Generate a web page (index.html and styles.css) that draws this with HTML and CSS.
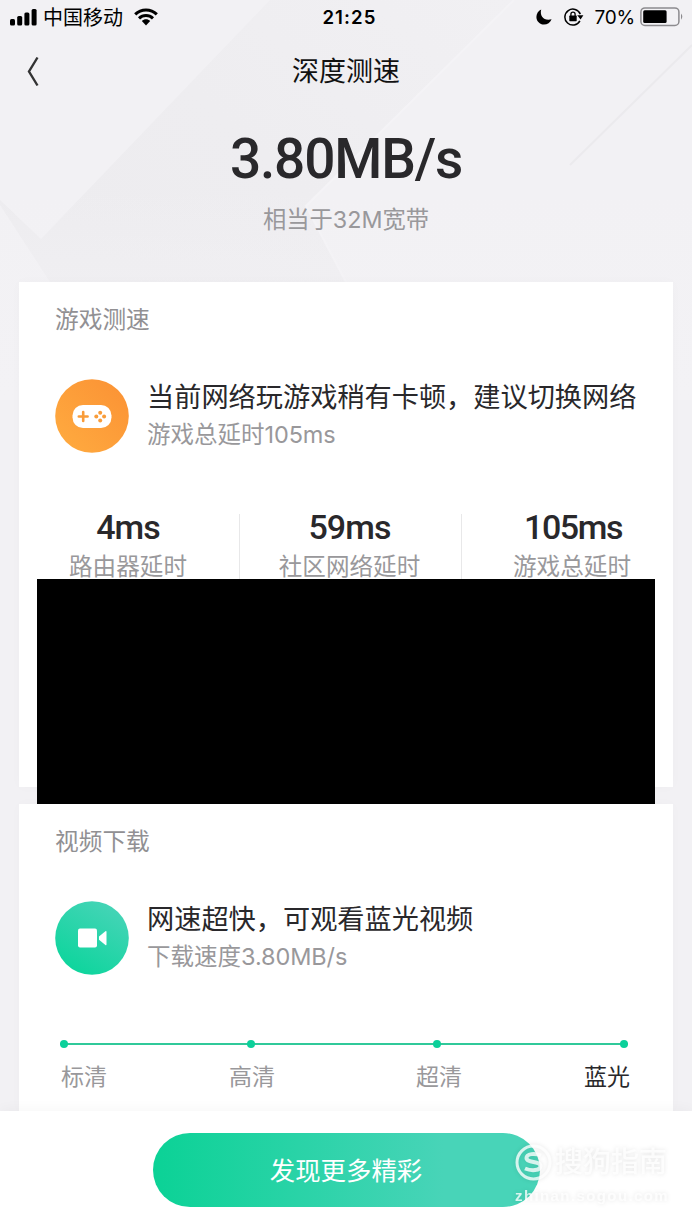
FILE: index.html
```html
<!DOCTYPE html>
<html lang="zh-CN">
<head>
<meta charset="utf-8">
<title>深度测速</title>
<link rel="stylesheet" href="styles.css">
</head>
<body>
<div class="screen">
  <svg class="backdrop" width="692" height="400" viewBox="0 0 692 400">
    <defs>
      <linearGradient id="fold" x1="0" y1="0.6" x2="1" y2="0"><stop offset="0" stop-color="#edecef"/><stop offset="0.4" stop-color="#eeedf0"/><stop offset="1" stop-color="#f1f0f3"/></linearGradient>
      <linearGradient id="fade" x1="0" y1="0" x2="0" y2="1"><stop offset="0" stop-color="#f3f2f5" stop-opacity="0"/><stop offset="1" stop-color="#f3f2f5"/></linearGradient>
    </defs>
    <path d="M270 0H514L306 206L346 282H50L0 205V200L41 239Z" fill="url(#fold)"/>
    <path d="M514 0L306 206L346 282" fill="none" stroke="#f4f3f6" stroke-width="2"/>
    <path d="M692 45L570 165" stroke="#ebeaed" stroke-width="2"/>
    <path d="M0 190H692V400H0Z" fill="url(#fade)"/>
  </svg>

  <div class="status">
    <div class="status-left">
      <svg class="signal" width="27" height="18" viewBox="0 0 27 18"><rect x="0" y="11" width="5" height="6.5" rx="1.5"/><rect x="7.2" y="8" width="5" height="9.5" rx="1.5"/><rect x="14.4" y="4.5" width="5" height="13" rx="1.5"/><rect x="21.6" y="1" width="5" height="16.5" rx="1.5"/></svg>
      <span class="carrier">中国移动</span>
      <svg class="wifi" width="24" height="18" viewBox="0 0 24 18"><path d="M1.2 6.4C7.2.4 16.8.4 22.8 6.4M5 10.4C9 6.6 15 6.6 19 10.4" fill="none" stroke="#000" stroke-width="3"/><path d="M7.8 13C10.2 10.8 13.8 10.8 16.2 13L12 17.4Z"/></svg>
    </div>
    <span class="clock">21:25</span>
    <div class="status-right">
      <svg width="16" height="16" viewBox="0 0 16 16"><path d="M5.2.4C3.4 6.8 8.2 12.4 15.6 10.2C14.2 13.6 11.4 15.6 8 15.6C3.8 15.6.4 12.2.4 8C.4 4.6 2.2 1.8 5.2.4Z"/></svg>
      <svg class="lock" width="20" height="18" viewBox="0 0 20 18"><path d="M16.3 6.1A8 8 0 1 0 15.9 12.9" fill="none" stroke="#000" stroke-width="1.5"/><path d="M13.2 7.2H19.4L16.6 11.4Z"/><rect x="5.3" y="7.6" width="7.4" height="5.6" rx=".6"/><path d="M6.9 8V6.2a2.1 2.1 0 0 1 4.2 0V8" fill="none" stroke="#000" stroke-width="1.3"/></svg>
      <span class="percent">70%</span>
      <svg class="battery" width="44" height="20" viewBox="0 0 44 20"><rect x=".9" y=".9" width="38" height="17.6" rx="4" fill="none" stroke="#8c8b8e" stroke-width="1.5"/><rect x="3.2" y="3.3" width="23.4" height="12.8" rx="1.5"/><path d="M41 6.6q2.6 3 0 6.2Z" fill="#8c8b8e"/></svg>
    </div>
  </div>

  <div class="nav">
    <svg class="back" width="12" height="31" viewBox="0 0 12 31"><path d="M10.5 1.5L2 15.5L10.5 29.5" fill="none" stroke="#333" stroke-width="2.4"/></svg>
    <h1 class="title">深度测速</h1>
  </div>

  <div class="hero">
    <div class="speed">3.80MB/s</div>
    <div class="equiv">相当于32M宽带</div>
  </div>

  <section class="card game">
    <h2 class="heading">游戏测速</h2>
    <div class="summary">
      <svg class="badge" width="74" height="74" viewBox="0 0 74 74">
        <defs><linearGradient id="orange" x1="0" y1="1" x2="1" y2="0"><stop offset="0" stop-color="#ffac40"/><stop offset="1" stop-color="#fb9134"/></linearGradient></defs>
        <circle cx="37" cy="37" r="36.8" fill="url(#orange)"/>
        <rect x="17.5" y="26" width="39" height="23" rx="10.5" fill="#fff"/>
        <path d="M23.8 37.5H32.6M28.2 33V42" stroke="#f99c39" stroke-width="2.6" stroke-linecap="round"/>
        <g fill="#f99c39"><circle cx="45.2" cy="33.7" r="2"/><circle cx="45.2" cy="41.5" r="2"/><circle cx="41.3" cy="37.6" r="2"/><circle cx="49.1" cy="37.6" r="2"/></g>
      </svg>
      <div class="copy">
        <div class="lead">当前网络玩游戏稍有卡顿，建议切换网络</div>
        <div class="detail">游戏总延时<span class="latin">105ms</span></div>
      </div>
    </div>
    <div class="metrics">
      <div class="metric"><div class="value">4ms</div><div class="label">路由器延时</div></div>
      <div class="metric"><div class="value">59ms</div><div class="label">社区网络延时</div></div>
      <div class="metric"><div class="value">105ms</div><div class="label">游戏总延时</div></div>
    </div>
    <div class="redaction"></div>
  </section>

  <section class="card video">
    <h2 class="heading">视频下载</h2>
    <div class="summary">
      <svg class="badge" width="74" height="74" viewBox="0 0 74 74">
        <defs><linearGradient id="green" x1="0.2" y1="1" x2="0.8" y2="0"><stop offset="0" stop-color="#0ad59b"/><stop offset="1" stop-color="#48d4b8"/></linearGradient></defs>
        <circle cx="37" cy="37" r="36.8" fill="url(#green)"/>
        <rect x="23" y="27.6" width="19" height="19" rx="2" fill="#fff"/>
        <path d="M44 35.5L50.4 30.2Q51.5 29.5 51.5 31V43.2Q51.5 44.7 50.4 44L44 38.7Z" fill="#fff"/>
      </svg>
      <div class="copy">
        <div class="lead">网速超快，可观看蓝光视频</div>
        <div class="detail">下载速度<span class="latin">3.80MB/s</span></div>
      </div>
    </div>
    <div class="track"><i class="dot"></i><i class="dot"></i><i class="dot"></i><i class="dot"></i></div>
    <div class="levels"><span class="level">标清</span><span class="level">高清</span><span class="level">超清</span><span class="level active">蓝光</span></div>
  </section>

  <div class="footer">
    <div class="button">发现更多精彩</div>
    <div class="watermark">
      <div class="brand">
        <svg width="37" height="37" viewBox="0 0 37 37"><circle cx="18.5" cy="18.5" r="16.5" fill="none" stroke="currentColor" stroke-width="3"/><path d="M26 11.5C20 9 11.5 9.5 11.5 14C11.5 19 25.5 17 25.5 22C25.5 27 16 27 10 24.5" fill="none" stroke="currentColor" stroke-width="4"/></svg>
        <span>搜狗指南</span>
      </div>
      <div class="site">zhinan.sogou.com</div>
    </div>
  </div>
</div>
</body>
</html>
```
FILE: styles.css
```css
* { box-sizing: border-box; }
body {
  margin: 0;
  background: #f3f2f5;
  font-family: Inter, "Noto Sans CJK SC", sans-serif;
  color: #29282b;
}
svg { display: block; flex: none; }
.screen {
  position: relative;
  width: 692px;
  height: 1230px;
  overflow: hidden;
  background: #f2f1f4;
  white-space: nowrap;
}
.backdrop { position: absolute; left: 0; top: 0; }

.status {
  position: relative;
  display: grid;
  grid-template-columns: 1fr auto 1fr;
  align-items: center;
  height: 34px;
  padding: 0 8px 0 10px;
  color: #000;
}
.status-left, .status-right { display: flex; align-items: center; }
.status-right { justify-content: flex-end; }
.carrier { margin-left: 6px; padding-top: 2px; font-size: 20px; line-height: 30px; }
.wifi { margin-left: 11px; }
.clock { padding-left: 5px; font-size: 18.6px; font-weight: 600; letter-spacing: 1.1px; }
.lock { margin-left: 12px; }
.percent { margin-left: 11px; font-size: 19px; letter-spacing: -0.2px; }
.battery { margin-left: 5px; }

.nav {
  position: relative;
  display: grid;
  grid-template-columns: 36px 1fr 36px;
  align-items: center;
  height: 74px;
  padding: 0 27px;
}
.title {
  margin: 0;
  padding-top: 2px;
  font-size: 27px;
  font-weight: 400;
  line-height: 40px;
  text-align: center;
  color: #111;
}

.hero { position: relative; height: 174px; padding-top: 18px; text-align: center; }
.speed {
  font-family: Roboto, sans-serif;
  font-size: 55px;
  font-weight: 500;
  line-height: 66px;
  letter-spacing: -1.2px;
}
.equiv { margin-top: 11px; font-size: 23.3px; line-height: 34px; color: #99989b; }

.card {
  position: relative;
  margin: 0 19px;
  padding: 0 36px;
  background: #fff;
  box-shadow: 0 0 12px rgba(0, 0, 0, 0.02);
}
.game { height: 505px; padding-top: 20px; }
.video { height: 307px; margin-top: 17px; padding-top: 20px; }
.heading {
  margin: 0;
  font-size: 23.7px;
  font-weight: 400;
  line-height: 36px;
  color: #919093;
}
.summary { display: flex; gap: 18px; margin-top: 41px; }
.copy { padding-top: 1px; }
.lead { font-size: 27.2px; line-height: 36px; }
.detail { margin-top: 1px; font-size: 23.5px; line-height: 36px; color: #99989b; }
.latin { letter-spacing: -0.1px; }

.metrics { display: flex; margin: 61px -36px 0; }
.metric { flex: 0 0 222px; height: 66px; text-align: center; }
.metric:first-child { flex-basis: 220px; padding-right: 2px; }
.metric:nth-child(2) { padding-right: 2px; }
.metric:last-child { flex-basis: 212px; padding-left: 9px; }
.metric + .metric { border-left: 1px solid #e8e8e9; }
.value {
  font-family: Roboto, sans-serif;
  font-size: 34px;
  font-weight: 500;
  line-height: 26px;
  letter-spacing: -0.9px;
}
.metric:last-child .value { padding-left: 2px; letter-spacing: -1.4px; }
.label { margin-top: 9px; font-size: 23.6px; line-height: 36px; color: #99989b; }
.redaction {
  position: absolute;
  z-index: 1;
  left: 18px;
  top: 297px;
  width: 618px;
  height: 225px;
  background: #000;
}

.track {
  display: flex;
  justify-content: space-between;
  align-items: center;
  height: 8px;
  margin: 65px 9px 0 5px;
  background: linear-gradient(#30c99a, #30c99a) center / 100% 2px no-repeat;
}
.dot { width: 8px; height: 8px; border-radius: 50%; background: #0bd09a; }
.levels { display: flex; margin-top: 11px; padding: 0 7px 0 6px; }
.level { width: 46px; font-size: 23px; line-height: 36px; color: #99989b; }
.level:nth-child(2) { margin-left: 122px; }
.level:nth-child(3) { margin-left: 141px; }
.level:nth-child(4) { margin-left: 122px; }
.level.active { color: #29282b; }

.footer {
  position: relative;
  display: flex;
  justify-content: center;
  height: 119px;
  padding-top: 22px;
  background: #fff;
  box-shadow: 0 -2px 12px rgba(0, 0, 0, 0.035);
}
.button {
  width: 387px;
  height: 74px;
  padding-top: 1px;
  border-radius: 37px;
  background: linear-gradient(90deg, #0bd296, #48d4b8 75%);
  font-size: 25.4px;
  line-height: 74px;
  text-align: center;
  color: #fff;
}
.watermark {
  position: absolute;
  left: 515px;
  top: 33px;
  color: rgba(255, 255, 255, 0.78);
  filter: drop-shadow(0 0 2px rgba(0, 0, 0, 0.13));
}
.brand { display: flex; align-items: center; gap: 3px; font-size: 28px; font-weight: 500; line-height: 37px; }
.site { font-family: "Liberation Sans", sans-serif; font-size: 15px; font-weight: 700; line-height: 20px; letter-spacing: 1.4px; margin-top: 5px; }
```
